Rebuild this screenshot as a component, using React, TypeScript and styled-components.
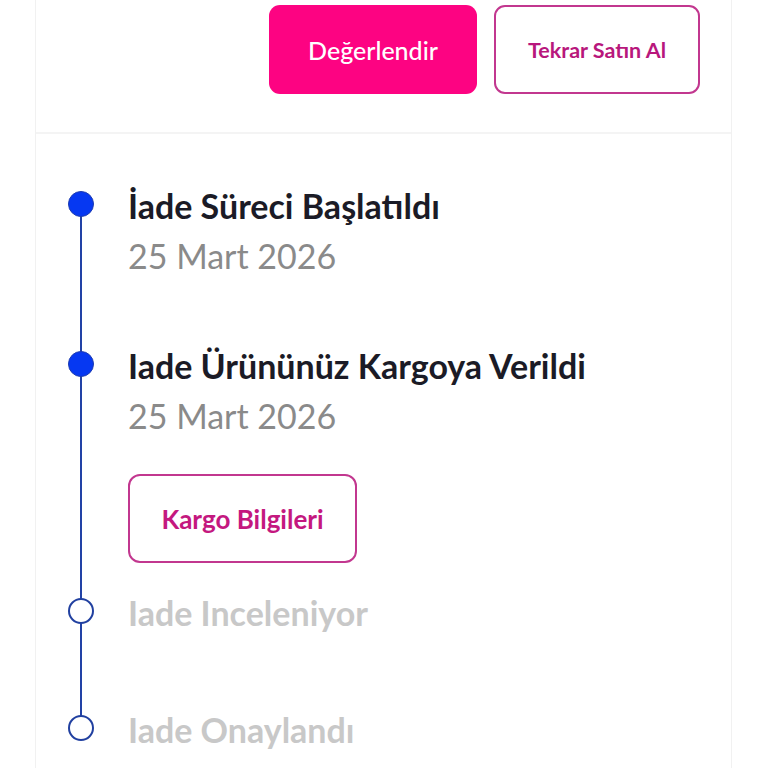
import React from "react";
import styled, { createGlobalStyle, css } from "styled-components";

const Global = createGlobalStyle`
  html, body { margin: 0; padding: 0; background: #ffffff; }
  body { font-family: "Lato", "Noto Sans", sans-serif; }
  * { box-sizing: border-box; }
`;

const Card = styled.div`
  margin: 0 36px 0 35px;
  min-height: 768px;
  background: #ffffff;
  border-left: 1px solid #f1f1f1;
  border-right: 1px solid #f1f1f1;
`;

const ActionBar = styled.div`
  display: flex;
  justify-content: flex-end;
  gap: 17px;
  padding: 5px 31px 38px 0;
  border-bottom: 2px solid #f4f4f4;
`;

const TopButton = styled.button<{ $primary?: boolean; $w: number }>`
  width: ${(p) => p.$w}px;
  height: 89px;
  border-radius: 11px;
  font-family: "Lato", "Noto Sans", sans-serif;
  cursor: pointer;
  ${(p) =>
    p.$primary
      ? css`
          background: #fd0382;
          border: none;
          color: #ffffff;
          font-size: 25px;
          font-weight: 500;
        `
      : css`
          background: #ffffff;
          border: 2px solid #c2378f;
          color: #b8177c;
          font-size: 21.5px;
          font-weight: 700;
        `}
`;

const Timeline = styled.div`
  padding-top: 52px;
`;

const Step = styled.div`
  display: grid;
  grid-template-columns: 90px 1fr;
  column-gap: 2px;
`;

const Marker = styled.div<{ $last?: boolean }>`
  position: relative;
  display: flex;
  justify-content: center;
  align-items: flex-start;
  ${(p) =>
    !p.$last &&
    css`
      &::after {
        content: "";
        position: absolute;
        left: 50%;
        top: 18px;
        bottom: -18px;
        width: 2px;
        transform: translateX(-50%);
        background: #2242a6;
      }
    `}
`;

const Dot = styled.span<{ $done?: boolean }>`
  position: relative;
  z-index: 1;
  width: 26px;
  height: 26px;
  margin-top: 5px;
  border-radius: 50%;
  ${(p) =>
    p.$done
      ? css`
          background: #0638f2;
          border: 1.5px solid #1d3bb0;
        `
      : css`
          background: #ffffff;
          border: 2.5px solid #2140a0;
        `}
`;

const Content = styled.div<{ $pad: number }>`
  display: flex;
  flex-direction: column;
  padding-bottom: ${(p) => p.$pad}px;
`;

const Title = styled.div<{ $done?: boolean }>`
  font-family: "Lato", sans-serif;
  font-weight: 700;
  font-size: 34px;
  line-height: 40px;
  color: ${(p) => (p.$done ? "#1b1b26" : "#c8c8c8")};
`;

const DateText = styled.div`
  margin-top: 10px;
  font-family: "Lato", sans-serif;
  font-weight: 400;
  font-size: 34px;
  line-height: 40px;
  color: #8a8a8a;
`;

const OutlineButton = styled.button`
  align-self: flex-start;
  margin-top: 38px;
  width: 229px;
  height: 89px;
  border: 2px solid #c2378f;
  border-radius: 12px;
  background: #ffffff;
  font-family: "Lato", sans-serif;
  font-weight: 700;
  font-size: 26px;
  color: #c4187f;
  cursor: pointer;
`;

type StepData = {
  title: string;
  date?: string;
  done: boolean;
  action?: string;
  pad: number;
};

const steps: StepData[] = [
  { title: "İade Süreci Başlatıldı", date: "25 Mart 2026", done: true, pad: 70 },
  {
    title: "Iade Ürününüz Kargoya Verildi",
    date: "25 Mart 2026",
    done: true,
    action: "Kargo Bilgileri",
    pad: 30,
  },
  { title: "Iade Inceleniyor", done: false, pad: 77 },
  { title: "Iade Onaylandı", done: false, pad: 20 },
];

export default function App() {
  return (
    <>
      <Global />
      <Card>
        <ActionBar>
          <TopButton $primary $w={208}>
            Değerlendir
          </TopButton>
          <TopButton $w={206}>Tekrar Satın Al</TopButton>
        </ActionBar>
        <Timeline>
          {steps.map((s, i) => (
            <Step key={s.title}>
              <Marker $last={i === steps.length - 1}>
                <Dot $done={s.done} />
              </Marker>
              <Content $pad={s.pad}>
                <Title $done={s.done}>{s.title}</Title>
                {s.date && <DateText>{s.date}</DateText>}
                {s.action && <OutlineButton>{s.action}</OutlineButton>}
              </Content>
            </Step>
          ))}
        </Timeline>
      </Card>
    </>
  );
}
